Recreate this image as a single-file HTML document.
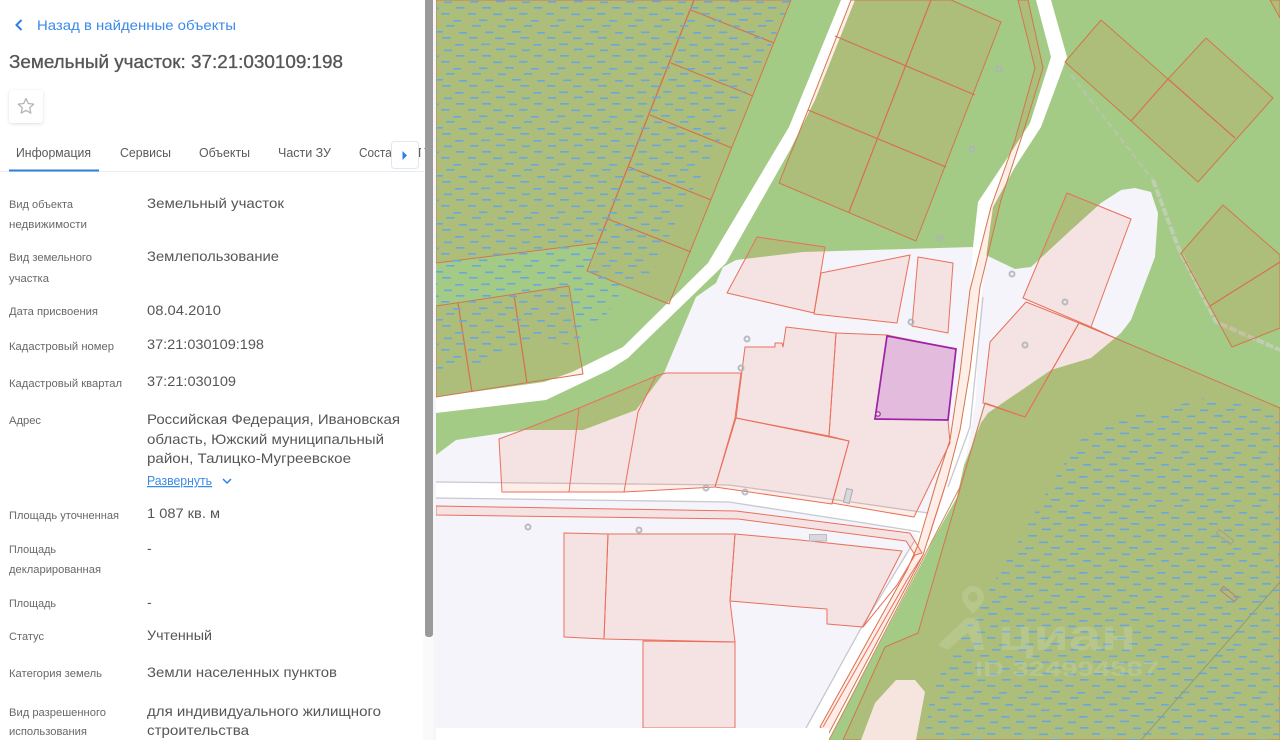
<!DOCTYPE html>
<html lang="ru">
<head>
<meta charset="utf-8">
<title>Земельный участок</title>
<style>
html,body{margin:0;padding:0;background:#fff;width:1280px;height:740px;overflow:hidden}
svg{display:block}
text{font-family:"Liberation Sans","DejaVu Sans",sans-serif}
.l{font-size:11px;fill:#686868}
.v{font-size:14px;fill:#565656}
.t{font-size:12.5px;fill:#5a5a5a}
</style>
</head>
<body>
<svg xmlns="http://www.w3.org/2000/svg" width="1280" height="740" viewBox="0 0 1280 740">
<defs>
<pattern id="w" width="78" height="48" patternUnits="userSpaceOnUse">
<g fill="#6aa6e0">
<rect x="2" y="1" width="8.500" height="1.600" rx=".6"/><rect x="28" y=".6" width="9" height="1.600" rx=".6"/><rect x="54" y="1.500" width="8" height="1.600" rx=".6"/>
<rect x="14" y="7" width="9" height="1.600" rx=".6"/><rect x="41" y="7.500" width="8" height="1.600" rx=".6"/><rect x="66" y="7" width="8.500" height="1.600" rx=".6"/>
<rect x="0" y="13" width="8" height="1.600" rx=".6"/><rect x="25" y="13.500" width="9" height="1.600" rx=".6"/><rect x="51" y="13" width="8.500" height="1.600" rx=".6"/>
<rect x="11" y="19.500" width="8.500" height="1.600" rx=".6"/><rect x="37" y="19" width="9" height="1.600" rx=".6"/><rect x="63" y="20" width="8" height="1.600" rx=".6"/>
<rect x="4" y="25" width="9" height="1.600" rx=".6"/><rect x="30" y="25.500" width="8" height="1.600" rx=".6"/><rect x="56" y="25" width="8.500" height="1.600" rx=".6"/>
<rect x="17" y="31.500" width="8.500" height="1.600" rx=".6"/><rect x="44" y="31" width="9" height="1.600" rx=".6"/><rect x="69" y="32" width="8" height="1.600" rx=".6"/>
<rect x="1" y="37" width="8.500" height="1.600" rx=".6"/><rect x="27" y="37.500" width="8.500" height="1.600" rx=".6"/><rect x="52" y="37" width="9" height="1.600" rx=".6"/>
<rect x="13" y="43.500" width="9" height="1.600" rx=".6"/><rect x="39" y="43" width="8.500" height="1.600" rx=".6"/><rect x="65" y="44" width="8.500" height="1.600" rx=".6"/>
</g>
</pattern>
<filter id="sh" x="-30%" y="-30%" width="160%" height="160%"><feDropShadow dx="0" dy="1" stdDeviation="1.6" flood-color="#000" flood-opacity=".13"/></filter>
<filter id="b"><feGaussianBlur stdDeviation=".22"/></filter>
<filter id="tb"><feGaussianBlur stdDeviation=".2"/></filter>
</defs>

<!-- MAP -->
<g filter="url(#b)">
<rect x="436" y="0" width="844" height="740" fill="#a3cb85"/>

<!-- light land -->
<g fill="#f4f4fa">
<polygon points="803,252 736,260 723,267 716,283 696,297 664,373 636,410 583,430 523,430 456,440 436,455 436,740 829,740 960,470 985,250 973,247"/>
<polygon points="975,250 990,257 1015,269 1031,267 1071,230 1101,203 1121,190 1135,188 1151,192 1158,213 1155,257 1131,320 1121,333 1091,358 1051,370 988,413 981,423 965,463 955,475"/>
</g>

<!-- dashed path -->
<polyline points="1071,75 1153,180" fill="none" stroke="#b6c6a6" stroke-width="2.500" stroke-dasharray="6 4"/>
<polyline points="1153,180 1178,247 1216,322 1280,350" fill="none" stroke="#bfcfb2" stroke-width="4" stroke-dasharray="8 2"/>

<!-- white roads -->
<g fill="#fff">
<polygon points="841,0 789,127 708,263 623,347 572,372 544,382 436,397 436,413 546,400 609,370 628,358 726,263 790,150 815,100 855,0"/>
<polygon points="1036,0 1051,57 1030,123 1008,157 978,202 973,247 970,290 960,373 950,443 928,513 907,555 860,630 807,728 800,740 829,740 927,553 933,540 957,497 968,447 976,400 978,340 982,290 987,250 993,207 1015,167 1041,127 1067,57 1051,0"/>
<polygon points="436,482 729,485 858,503 930,514 922,535 858,522 729,502 436,498"/>
</g>

<!-- grey road borders -->
<g fill="none" stroke="#c8c9cf" stroke-width="1.300">
<polyline points="436,482 729,485 858,503 928,513"/>
<polyline points="436,498 729,502 858,522 920,532"/>
<polyline points="983,297 970,427 948,487"/>
<polyline points="915,540 860,630 806,728"/>
</g>

<!-- parcels on green: muted orange stroke -->
<g fill="rgba(255,83,33,.1)" stroke="#d4754c" stroke-width="1" stroke-linejoin="round">
<polygon points="436,0 694,0 598,243 436,263"/>
<polygon points="694,0 791,0 669,304 587,271"/>
<polygon points="436,306 569,286 583,374 544,380 436,397"/>
<polygon points="851,0 808,110 779,183 916,241 1001,22 951,0"/>
<polygon points="1065,62 1101,20 1168,79 1206,38 1273,98 1198,182 1131,121"/>
<polygon points="1223,205 1280,255 1280,328 1232,347 1181,253"/>
<polygon points="1270,0 1280,0 1280,18"/>
<polygon points="843,740 885,647 918,633 985,403 1025,417 1079,323 1115,338 1280,408 1280,740"/>
<polygon points="1018,0 1035,68 1015,140 991,207 970,290 960,373 950,440 937,480 918,545 907,570 820,727 829,733 923,555 947,480 960,430 970,370 980,287 1001,200 1023,133 1043,68 1028,0"/>
</g>

<!-- parcels on light: pinker stroke -->
<g fill="rgba(255,83,33,.1)" stroke="#ea6f5c" stroke-width="1" stroke-linejoin="round">
<polygon points="1067,193 1131,219 1091,327 1023,298"/>
<polygon points="1026,302 990,342 983,403 1025,417 1079,323"/>
<polygon points="757,237 825,247 814,313 727,293"/>
<polygon points="821,273 910,255 897,323 814,314"/>
<polygon points="918,257 953,263 948,333 912,326"/>
<polygon points="786,327 783,347 782,343 775,343 775,347 745,347 736,418 829,436 836,333"/>
<polygon points="836,333 887,335 956,349 948,420 950,443 914,517 832,503 849,441 829,436"/>
<polygon points="736,418 849,441 832,504 715,487"/>
<polygon points="741,373 693,373 666,373 656,376 579,408 523,430 499,439 502,492 569,492 579,408 569,492 624,492 715,487 735,418"/>
<polygon points="564,533 608,534 604,639 564,637"/>
<polygon points="608,534 735,534 730,601 735,642 604,639"/>
<polygon points="643,641 735,642 735,728 643,728"/>
<polygon points="735,534 800,540 902,551 863,627 827,624 827,609 800,607 730,601"/>
<polygon points="436,506 736,511 910,533 922,553 915,555 906,541 738,519 436,515"/>
<polyline points="656,376 638,412 624,492" fill="none"/>
<polyline points="915,555 897,585 863,627" fill="none"/>
<polyline points="923,555 907,580 823,727" fill="none"/>
<polyline points="947,480 928,540" fill="none"/>
<polyline points="1091,327 1115,338" fill="none"/>
</g>
<g stroke="#d8704a" stroke-width="1.200" fill="none">
<line x1="694" y1="0" x2="598" y2="243"/>
<line x1="691" y1="10" x2="774" y2="43"/>
<line x1="671" y1="63" x2="753" y2="96"/>
<line x1="650" y1="115" x2="732" y2="148"/>
<line x1="629" y1="167" x2="711" y2="200"/>
<line x1="608" y1="219" x2="691" y2="252"/>
<line x1="458" y1="303" x2="472" y2="392"/>
<line x1="514" y1="295" x2="527" y2="383"/>
<line x1="835" y1="36" x2="975" y2="95"/>
<line x1="808" y1="110" x2="946" y2="167"/>
<line x1="931" y1="0" x2="849" y2="212"/>
<line x1="1168" y1="79" x2="1131" y2="121"/>
<line x1="1168" y1="79" x2="1235" y2="138"/>
<line x1="1210" y1="306" x2="1280" y2="262"/>
</g>
<polyline points="829,740 960,487 985,403" fill="none" stroke="#cf8a5c" stroke-width="1"/>

<!-- water -->
<polygon fill="url(#w)" points="436,0 791,0 769,50 753,77 729,123 703,173 686,200 666,243 649,277 633,283 619,295 606,315 584,328 576,347 536,337 503,353 469,367 436,370"/>
<polygon fill="url(#w)" points="1208,397 1280,413 1280,740 926,740 926,730 931,693 951,653 975,613 985,597 1001,570 1021,537 1041,502 1058,473 1078,443 1091,428 1145,413 1191,402"/>

<!-- pale pink blob bottom -->
<polygon points="896,680 915,680 925,692 916,740 861,740 875,703" fill="#f6e4df"/>

<!-- diagonal line and small rects -->
<line x1="1280" y1="582" x2="1141" y2="740" stroke="#8d9b78" stroke-width="1"/>
<rect x="1216" y="534.500" width="18" height="5" fill="none" stroke="#a89f8c" transform="rotate(38 1225 537)"/>
<rect x="1220" y="591.500" width="18" height="5" fill="none" stroke="#c0806a" transform="rotate(38 1229 594)"/>

<!-- buildings -->
<rect x="809.500" y="534.500" width="17" height="6.500" fill="#d8d8de" stroke="#bcbcc4"/>
<rect x="845" y="489" width="6" height="14" fill="#d8d8de" stroke="#a9a9af" transform="rotate(14 848 496)"/>

<!-- points -->
<g fill="none" stroke="#b0b3b8" stroke-width="2" opacity=".85">
<circle cx="528" cy="527" r="2.500"/><circle cx="639" cy="530" r="2.500"/><circle cx="706" cy="488" r="2.500"/><circle cx="745" cy="492" r="2.500"/>
<circle cx="747" cy="339" r="2.500"/><circle cx="741" cy="368" r="2.500"/><circle cx="911" cy="322" r="2.500"/><circle cx="999" cy="69" r="2.500"/>
<circle cx="972" cy="149" r="2.500"/><circle cx="940" cy="238" r="2.500"/><circle cx="1012" cy="274" r="2.500"/><circle cx="1065" cy="302" r="2.500"/><circle cx="1025" cy="345" r="2.500"/>
</g>

<!-- selected parcel -->
<polygon points="887,336 956,349 948,420 875,419" fill="#e3bbdc" stroke="#9c22a8" stroke-width="1.700"/>
<circle cx="878" cy="414" r="2.200" fill="#f6e4e4" stroke="#9c22a8" stroke-width="1.200"/>

<!-- watermark -->
<g opacity=".13" fill="#fff">
<path fill-rule="evenodd" d="M973,586a11,11 0 0 1 11,11c0,6-7,12-11,17c-4,-5-11,-11-11,-17a11,11 0 0 1 11,-11zM973,592a5,5 0 1 0 .01,0z"/>
<polygon points="938,645 966,618 978,618 984,650 975,650 968,632 948,650"/>
<text x="998" y="650" font-size="44" font-weight="bold" textLength="138" lengthAdjust="spacingAndGlyphs">циан</text>
<text x="975" y="676" font-size="21" font-weight="bold" textLength="184" lengthAdjust="spacingAndGlyphs">ID 324994587</text>
</g>

<!-- bottom white strip -->
<rect x="436" y="728" width="393" height="12" fill="#fff"/>
</g>

<!-- LEFT PANEL -->
<rect x="0" y="0" width="436" height="740" fill="#fff"/>
<rect x="423" y="637" width="13" height="103" fill="#fafafa"/>
<rect x="433" y="0" width="3" height="740" fill="#f6f6f8"/>
<rect x="425" y="-6" width="8" height="643" rx="3" fill="#9a9a9a"/>

<g filter="url(#tb)">
<path d="M21.500,20L16.500,25L21.500,30" fill="none" stroke="#2f80e4" stroke-width="2"/>
<text x="37" y="30" font-size="14" fill="#3b8aea" textLength="199" lengthAdjust="spacingAndGlyphs">Назад в найденные объекты</text>
<text x="9" y="68" font-size="18" fill="#555" stroke="#555" stroke-width=".3" textLength="334" lengthAdjust="spacingAndGlyphs">Земельный участок: 37:21:030109:198</text>

<text x="16" y="157" class="t" textLength="75" lengthAdjust="spacingAndGlyphs">Информация</text>
<text x="120" y="157" class="t" textLength="51" lengthAdjust="spacingAndGlyphs">Сервисы</text>
<text x="199" y="157" class="t" textLength="51" lengthAdjust="spacingAndGlyphs">Объекты</text>
<text x="278" y="157" class="t" textLength="53" lengthAdjust="spacingAndGlyphs">Части ЗУ</text>
<text x="359" y="157" class="t" textLength="39" lengthAdjust="spacingAndGlyphs">Состав</text>
<text x="418" y="157" class="t">Г</text>

<text x="9" y="208" class="l" textLength="64" lengthAdjust="spacingAndGlyphs">Вид объекта</text>
<text x="9" y="228" class="l" textLength="78" lengthAdjust="spacingAndGlyphs">недвижимости</text>
<text x="147" y="208" class="v" textLength="137" lengthAdjust="spacingAndGlyphs">Земельный участок</text>
<text x="9" y="261" class="l" textLength="83" lengthAdjust="spacingAndGlyphs">Вид земельного</text>
<text x="9" y="282" class="l" textLength="40" lengthAdjust="spacingAndGlyphs">участка</text>
<text x="147" y="261" class="v" textLength="132" lengthAdjust="spacingAndGlyphs">Землепользование</text>
<text x="9" y="315" class="l" textLength="89" lengthAdjust="spacingAndGlyphs">Дата присвоения</text>
<text x="147" y="315" class="v" textLength="74" lengthAdjust="spacingAndGlyphs">08.04.2010</text>
<text x="9" y="350" class="l" textLength="105" lengthAdjust="spacingAndGlyphs">Кадастровый номер</text>
<text x="147" y="349" class="v" textLength="117" lengthAdjust="spacingAndGlyphs">37:21:030109:198</text>
<text x="9" y="387" class="l" textLength="113" lengthAdjust="spacingAndGlyphs">Кадастровый квартал</text>
<text x="147" y="386" class="v" textLength="89" lengthAdjust="spacingAndGlyphs">37:21:030109</text>
<text x="9" y="424" class="l" textLength="32" lengthAdjust="spacingAndGlyphs">Адрес</text>
<text x="147" y="424" class="v" textLength="253" lengthAdjust="spacingAndGlyphs">Российская Федерация, Ивановская</text>
<text x="147" y="444" class="v" textLength="237" lengthAdjust="spacingAndGlyphs">область, Южский муниципальный</text>
<text x="147" y="463" class="v" textLength="204" lengthAdjust="spacingAndGlyphs">район, Талицко-Мугреевское</text>
<text x="147" y="485" font-size="12.5" fill="#3b8aea" text-decoration="underline" textLength="65" lengthAdjust="spacingAndGlyphs">Развернуть</text>
<path d="M223,479l4,4 4,-4" fill="none" stroke="#2f80e4" stroke-width="1.500"/>
<text x="9" y="519" class="l" textLength="110" lengthAdjust="spacingAndGlyphs">Площадь уточненная</text>
<text x="147" y="518" class="v" textLength="73" lengthAdjust="spacingAndGlyphs">1 087 кв. м</text>
<text x="9" y="553" class="l" textLength="47" lengthAdjust="spacingAndGlyphs">Площадь</text>
<text x="9" y="573" class="l" textLength="92" lengthAdjust="spacingAndGlyphs">декларированная</text>
<text x="147" y="553" class="v">-</text>
<text x="9" y="607" class="l" textLength="47" lengthAdjust="spacingAndGlyphs">Площадь</text>
<text x="147" y="607" class="v">-</text>
<text x="9" y="640" class="l" textLength="35" lengthAdjust="spacingAndGlyphs">Статус</text>
<text x="147" y="640" class="v" textLength="65" lengthAdjust="spacingAndGlyphs">Учтенный</text>
<text x="9" y="677" class="l" textLength="93" lengthAdjust="spacingAndGlyphs">Категория земель</text>
<text x="147" y="677" class="v" textLength="190" lengthAdjust="spacingAndGlyphs">Земли населенных пунктов</text>
<text x="9" y="716" class="l" textLength="97" lengthAdjust="spacingAndGlyphs">Вид разрешенного</text>
<text x="9" y="735" class="l" textLength="78" lengthAdjust="spacingAndGlyphs">использования</text>
<text x="147" y="716" class="v" textLength="234" lengthAdjust="spacingAndGlyphs">для индивидуального жилищного</text>
<text x="147" y="735" class="v" textLength="102" lengthAdjust="spacingAndGlyphs">строительства</text>
</g>

<rect x="9" y="90" width="34" height="33" rx="3" fill="#fff" filter="url(#sh)"/>
<path d="M26,98.500l2.300,5 5.400,.6-4,3.700 1.100,5.300-4.800,-2.700-4.800,2.700 1.100,-5.300-4,-3.700 5.400,-.6z" fill="none" stroke="#b4b4b4" stroke-width="1.300" stroke-linejoin="round"/>

<rect x="421" y="141" width="3" height="30" fill="#fff"/>
<rect x="0" y="171" width="424" height="1" fill="#e9ecf1"/>
<rect x="9" y="169.500" width="90" height="2" fill="#2f80d9"/>
<rect x="391.500" y="141.500" width="27" height="27" rx="3" fill="#fff" stroke="#dfe7f1"/>
<path d="M402.500,151l4.500,4.500-4.500,4.500z" fill="#2f80e4"/>
</svg>
</body>
</html>
